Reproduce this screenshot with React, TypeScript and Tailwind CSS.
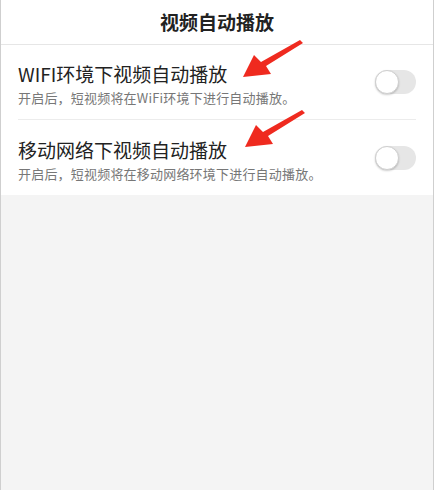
import React from 'react';

const Toggle: React.FC = () => (
  <div className="relative w-[41px] h-[24px] rounded-full bg-[#e6e6e6]">
    <div className="absolute left-0 top-0 w-[24px] h-[24px] rounded-full bg-white border border-[#cfcfcf] shadow-[0_1px_2px_rgba(0,0,0,0.2)]" />
  </div>
);

// red annotation arrow drawn over the screenshot
const Arrow: React.FC<{ className: string }> = ({ className }) => (
  <svg className={className} width="62" height="42" viewBox="0 0 62 42">
    <path d="M57 0 L60 3 L23 26 L28 34 L0 37 L11 15 L18 22 Z" fill="#ef2a1f" />
  </svg>
);

const Row: React.FC<{ title: string; desc: string; divider?: boolean }> = ({ title, desc, divider }) => (
  <div className={`flex items-center justify-between ml-[17px] mr-[17px] h-[75px] ${divider ? 'border-b border-[#ececec]' : ''}`}>
    <div className="flex flex-col pt-[5px]">
      <span className="text-[19px] leading-[26px] text-[#222]">{title}</span>
      <span className="text-[13px] leading-[20px] tracking-[0.2px] text-[#777] mt-[1px]">{desc}</span>
    </div>
    <Toggle />
  </div>
);

export default function App() {
  return (
    <div
      className="relative w-[434px] h-[490px] bg-[#f4f4f4] border-l border-r border-[#cfcfcf]"
      style={{ fontFamily: '"Noto Sans CJK SC", "Noto Sans", sans-serif' }}
    >
      <div className="bg-white">
        <div className="h-[45px] flex items-center justify-center border-b border-[#e6e6e6]">
          <span className="text-[19px] font-bold text-[#222]">视频自动播放</span>
        </div>
        <Row title="WIFI环境下视频自动播放" desc="开启后，短视频将在WiFi环境下进行自动播放。" divider />
        <Row title="移动网络下视频自动播放" desc="开启后，短视频将在移动网络环境下进行自动播放。" />
      </div>
      <Arrow className="absolute left-[242px] top-[40px]" />
      <Arrow className="absolute left-[244px] top-[110px]" />
    </div>
  );
}
